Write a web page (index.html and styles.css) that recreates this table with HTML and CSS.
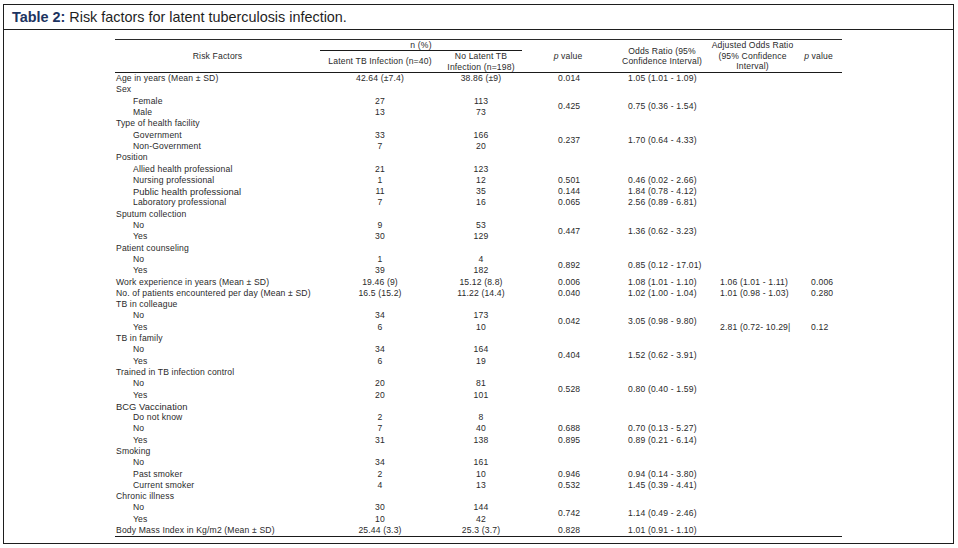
FILE: index.html
```html
<!DOCTYPE html>
<html lang="en">
<head>
<meta charset="utf-8">
<title>Table 2: Risk factors for latent tuberculosis infection</title>
<link rel="stylesheet" href="styles.css">
</head>
<body>
<div class="frame">
  <div class="title"><span class="tnum">Table 2:</span> Risk factors for latent tuberculosis infection.</div>
  <table class="rf">
    <colgroup>
      <col class="w1"><col class="w2"><col class="w3"><col class="w4"><col class="w5"><col class="w6"><col class="w7">
    </colgroup>
    <thead>
      <tr class="h1">
        <th rowspan="2" class="top bot">Risk Factors</th>
        <th colspan="2" class="top npct">n (%)</th>
        <th rowspan="2" class="top bot"><i>p</i> value</th>
        <th rowspan="2" class="top bot">Odds Ratio (95%<br>Confidence Interval)</th>
        <th rowspan="2" class="top bot adjh">Adjusted Odds Ratio<br>(95% Confidence<br>Interval)</th>
        <th rowspan="2" class="top bot"><i>p</i> value</th>
      </tr>
      <tr class="h2">
        <th class="bot">Latent TB Infection (n=40)</th>
        <th class="bot two">No Latent TB<br>Infection (n=198)</th>
      </tr>
    </thead>
    <tbody>
      <tr><td class="lbl">Age in years (Mean ± SD)</td><td class="c">42.64 (±7.4)</td><td class="c">38.86 (±9)</td><td class="pv">0.014</td><td class="or">1.05 (1.01 - 1.09)</td><td></td><td></td></tr>
      <tr><td class="lbl">Sex</td><td></td><td></td><td></td><td></td><td></td><td></td></tr>
      <tr><td class="sub">Female</td><td class="c">27</td><td class="c">113</td><td class="pv" rowspan="2">0.425</td><td class="or" rowspan="2">0.75 (0.36 - 1.54)</td><td></td><td></td></tr>
      <tr><td class="sub">Male</td><td class="c">13</td><td class="c">73</td><td></td><td></td></tr>
      <tr><td class="lbl">Type of health facility</td><td></td><td></td><td></td><td></td><td></td><td></td></tr>
      <tr><td class="sub">Government</td><td class="c">33</td><td class="c">166</td><td class="pv" rowspan="2">0.237</td><td class="or" rowspan="2">1.70 (0.64 - 4.33)</td><td></td><td></td></tr>
      <tr><td class="sub">Non-Government</td><td class="c">7</td><td class="c">20</td><td></td><td></td></tr>
      <tr><td class="lbl">Position</td><td></td><td></td><td></td><td></td><td></td><td></td></tr>
      <tr><td class="sub">Allied health professional</td><td class="c">21</td><td class="c">123</td><td></td><td></td><td></td><td></td></tr>
      <tr><td class="sub">Nursing professional</td><td class="c">1</td><td class="c">12</td><td class="pv">0.501</td><td class="or">0.46 (0.02 - 2.66)</td><td></td><td></td></tr>
      <tr><td class="sub big">Public health professional</td><td class="c">11</td><td class="c">35</td><td class="pv">0.144</td><td class="or">1.84 (0.78 - 4.12)</td><td></td><td></td></tr>
      <tr><td class="sub">Laboratory professional</td><td class="c">7</td><td class="c">16</td><td class="pv">0.065</td><td class="or">2.56 (0.89 - 6.81)</td><td></td><td></td></tr>
      <tr><td class="lbl">Sputum collection</td><td></td><td></td><td></td><td></td><td></td><td></td></tr>
      <tr><td class="sub">No</td><td class="c">9</td><td class="c">53</td><td class="pv" rowspan="2">0.447</td><td class="or" rowspan="2">1.36 (0.62 - 3.23)</td><td></td><td></td></tr>
      <tr><td class="sub">Yes</td><td class="c">30</td><td class="c">129</td><td></td><td></td></tr>
      <tr><td class="lbl">Patient counseling</td><td></td><td></td><td></td><td></td><td></td><td></td></tr>
      <tr><td class="sub">No</td><td class="c">1</td><td class="c">4</td><td class="pv" rowspan="2">0.892</td><td class="or" rowspan="2">0.85 (0.12 - 17.01)</td><td></td><td></td></tr>
      <tr><td class="sub">Yes</td><td class="c">39</td><td class="c">182</td><td></td><td></td></tr>
      <tr><td class="lbl">Work experience in years (Mean ± SD)</td><td class="c">19.46 (9)</td><td class="c">15.12 (8.8)</td><td class="pv">0.006</td><td class="or">1.08 (1.01 - 1.10)</td><td class="adj">1.06 (1.01 - 1.11)</td><td class="pa">0.006</td></tr>
      <tr><td class="lbl">No. of patients encountered per day (Mean ± SD)</td><td class="c">16.5 (15.2)</td><td class="c">11.22 (14.4)</td><td class="pv">0.040</td><td class="or">1.02 (1.00 - 1.04)</td><td class="adj">1.01 (0.98 - 1.03)</td><td class="pa">0.280</td></tr>
      <tr><td class="lbl">TB in colleague</td><td></td><td></td><td></td><td></td><td></td><td></td></tr>
      <tr><td class="sub">No</td><td class="c">34</td><td class="c">173</td><td class="pv" rowspan="2">0.042</td><td class="or" rowspan="2">3.05 (0.98 - 9.80)</td><td></td><td></td></tr>
      <tr><td class="sub">Yes</td><td class="c">6</td><td class="c">10</td><td class="adj">2.81 (0.72- 10.29|</td><td class="pa">0.12</td></tr>
      <tr><td class="lbl">TB in family</td><td></td><td></td><td></td><td></td><td></td><td></td></tr>
      <tr><td class="sub">No</td><td class="c">34</td><td class="c">164</td><td class="pv" rowspan="2">0.404</td><td class="or" rowspan="2">1.52 (0.62 - 3.91)</td><td></td><td></td></tr>
      <tr><td class="sub">Yes</td><td class="c">6</td><td class="c">19</td><td></td><td></td></tr>
      <tr><td class="lbl">Trained in TB infection control</td><td></td><td></td><td></td><td></td><td></td><td></td></tr>
      <tr><td class="sub">No</td><td class="c">20</td><td class="c">81</td><td class="pv" rowspan="2">0.528</td><td class="or" rowspan="2">0.80 (0.40 - 1.59)</td><td></td><td></td></tr>
      <tr><td class="sub">Yes</td><td class="c">20</td><td class="c">101</td><td></td><td></td></tr>
      <tr><td class="lbl big">BCG Vaccination</td><td></td><td></td><td></td><td></td><td></td><td></td></tr>
      <tr><td class="sub">Do not know</td><td class="c">2</td><td class="c">8</td><td></td><td></td><td></td><td></td></tr>
      <tr><td class="sub">No</td><td class="c">7</td><td class="c">40</td><td class="pv">0.688</td><td class="or">0.70 (0.13 - 5.27)</td><td></td><td></td></tr>
      <tr><td class="sub">Yes</td><td class="c">31</td><td class="c">138</td><td class="pv">0.895</td><td class="or">0.89 (0.21 - 6.14)</td><td></td><td></td></tr>
      <tr><td class="lbl">Smoking</td><td></td><td></td><td></td><td></td><td></td><td></td></tr>
      <tr><td class="sub">No</td><td class="c">34</td><td class="c">161</td><td></td><td></td><td></td><td></td></tr>
      <tr><td class="sub">Past smoker</td><td class="c">2</td><td class="c">10</td><td class="pv">0.946</td><td class="or">0.94 (0.14 - 3.80)</td><td></td><td></td></tr>
      <tr><td class="sub">Current smoker</td><td class="c">4</td><td class="c">13</td><td class="pv">0.532</td><td class="or">1.45 (0.39 - 4.41)</td><td></td><td></td></tr>
      <tr><td class="lbl">Chronic illness</td><td></td><td></td><td></td><td></td><td></td><td></td></tr>
      <tr><td class="sub">No</td><td class="c">30</td><td class="c">144</td><td class="pv" rowspan="2">0.742</td><td class="or" rowspan="2">1.14 (0.49 - 2.46)</td><td></td><td></td></tr>
      <tr><td class="sub">Yes</td><td class="c">10</td><td class="c">42</td><td></td><td></td></tr>
      <tr class="last"><td class="lbl">Body Mass Index in Kg/m2 (Mean ± SD)</td><td class="c">25.44 (3.3)</td><td class="c">25.3 (3.7)</td><td class="pv">0.828</td><td class="or">1.01 (0.91 - 1.10)</td><td></td><td></td></tr>
    </tbody>
  </table>
</div>
</body>
</html>
```

FILE: styles.css
```css
html, body {
  margin: 0;
  padding: 0;
  background: #ffffff;
}

body {
  font-family: "Liberation Sans", Arial, sans-serif;
  color: #222;
}

.frame {
  box-sizing: border-box;
  width: 951px;
  height: 540px;
  margin: 4px 0 0 3px;
  border: 1px solid #1e1e1e;
}

.title {
  box-sizing: border-box;
  height: 25px;
  padding: 4px 0 0 8px;
  border-bottom: 1px solid #1e1e1e;
  font-size: 14.4px;
  line-height: 17px;
  color: #1f1f1f;
}

.tnum {
  font-weight: bold;
  color: #1d3461;
}

.rf {
  table-layout: fixed;
  border-collapse: separate;
  border-spacing: 0;
  width: 727px;
  margin: 9px 0 0 111px;
  font-size: 8.6px;
  letter-spacing: 0.15px;
  color: #2a2a2a;
}

.w1 { width: 205px; }
.w2 { width: 120px; }
.w3 { width: 82px; }
.w4 { width: 92px; }
.w5 { width: 96px; }
.w6 { width: 85px; }
.w7 { width: 47px; }

.rf th {
  font-weight: normal;
  text-align: center;
  vertical-align: middle;
  padding: 0;
  line-height: 10.4px;
  background: #fff;
}

.rf th.top {
  border-top: 1.5px solid #2a2a2a;
}

.rf th.bot {
  border-bottom: 1px solid #1a1a1a;
}

.rf th.npct {
  height: 10px;
  line-height: 10px;
  border-bottom: 1px solid #1a1a1a;
}

.h2 th {
  height: 20px;
}

.rf th.two {
  line-height: 10.6px;
}

.rf td {
  padding: 0;
  height: 11.3px;
  line-height: 11.3px;
  white-space: nowrap;
  vertical-align: middle;
}

.rf td.lbl {
  padding-left: 1px;
}

.rf td.sub {
  padding-left: 18px;
}

.rf td.big {
  font-size: 9.4px;
  letter-spacing: 0.05px;
}

.rf td.c {
  text-align: center;
}

.rf td.pv {
  padding-left: 36px;
}

.rf td.or {
  padding-left: 14px;
}

.rf td.adj {
  padding-left: 10px;
}

.rf td.pa {
  padding-left: 16px;
}

.last td {
  border-bottom: 1px solid #1a1a1a;
}
```
